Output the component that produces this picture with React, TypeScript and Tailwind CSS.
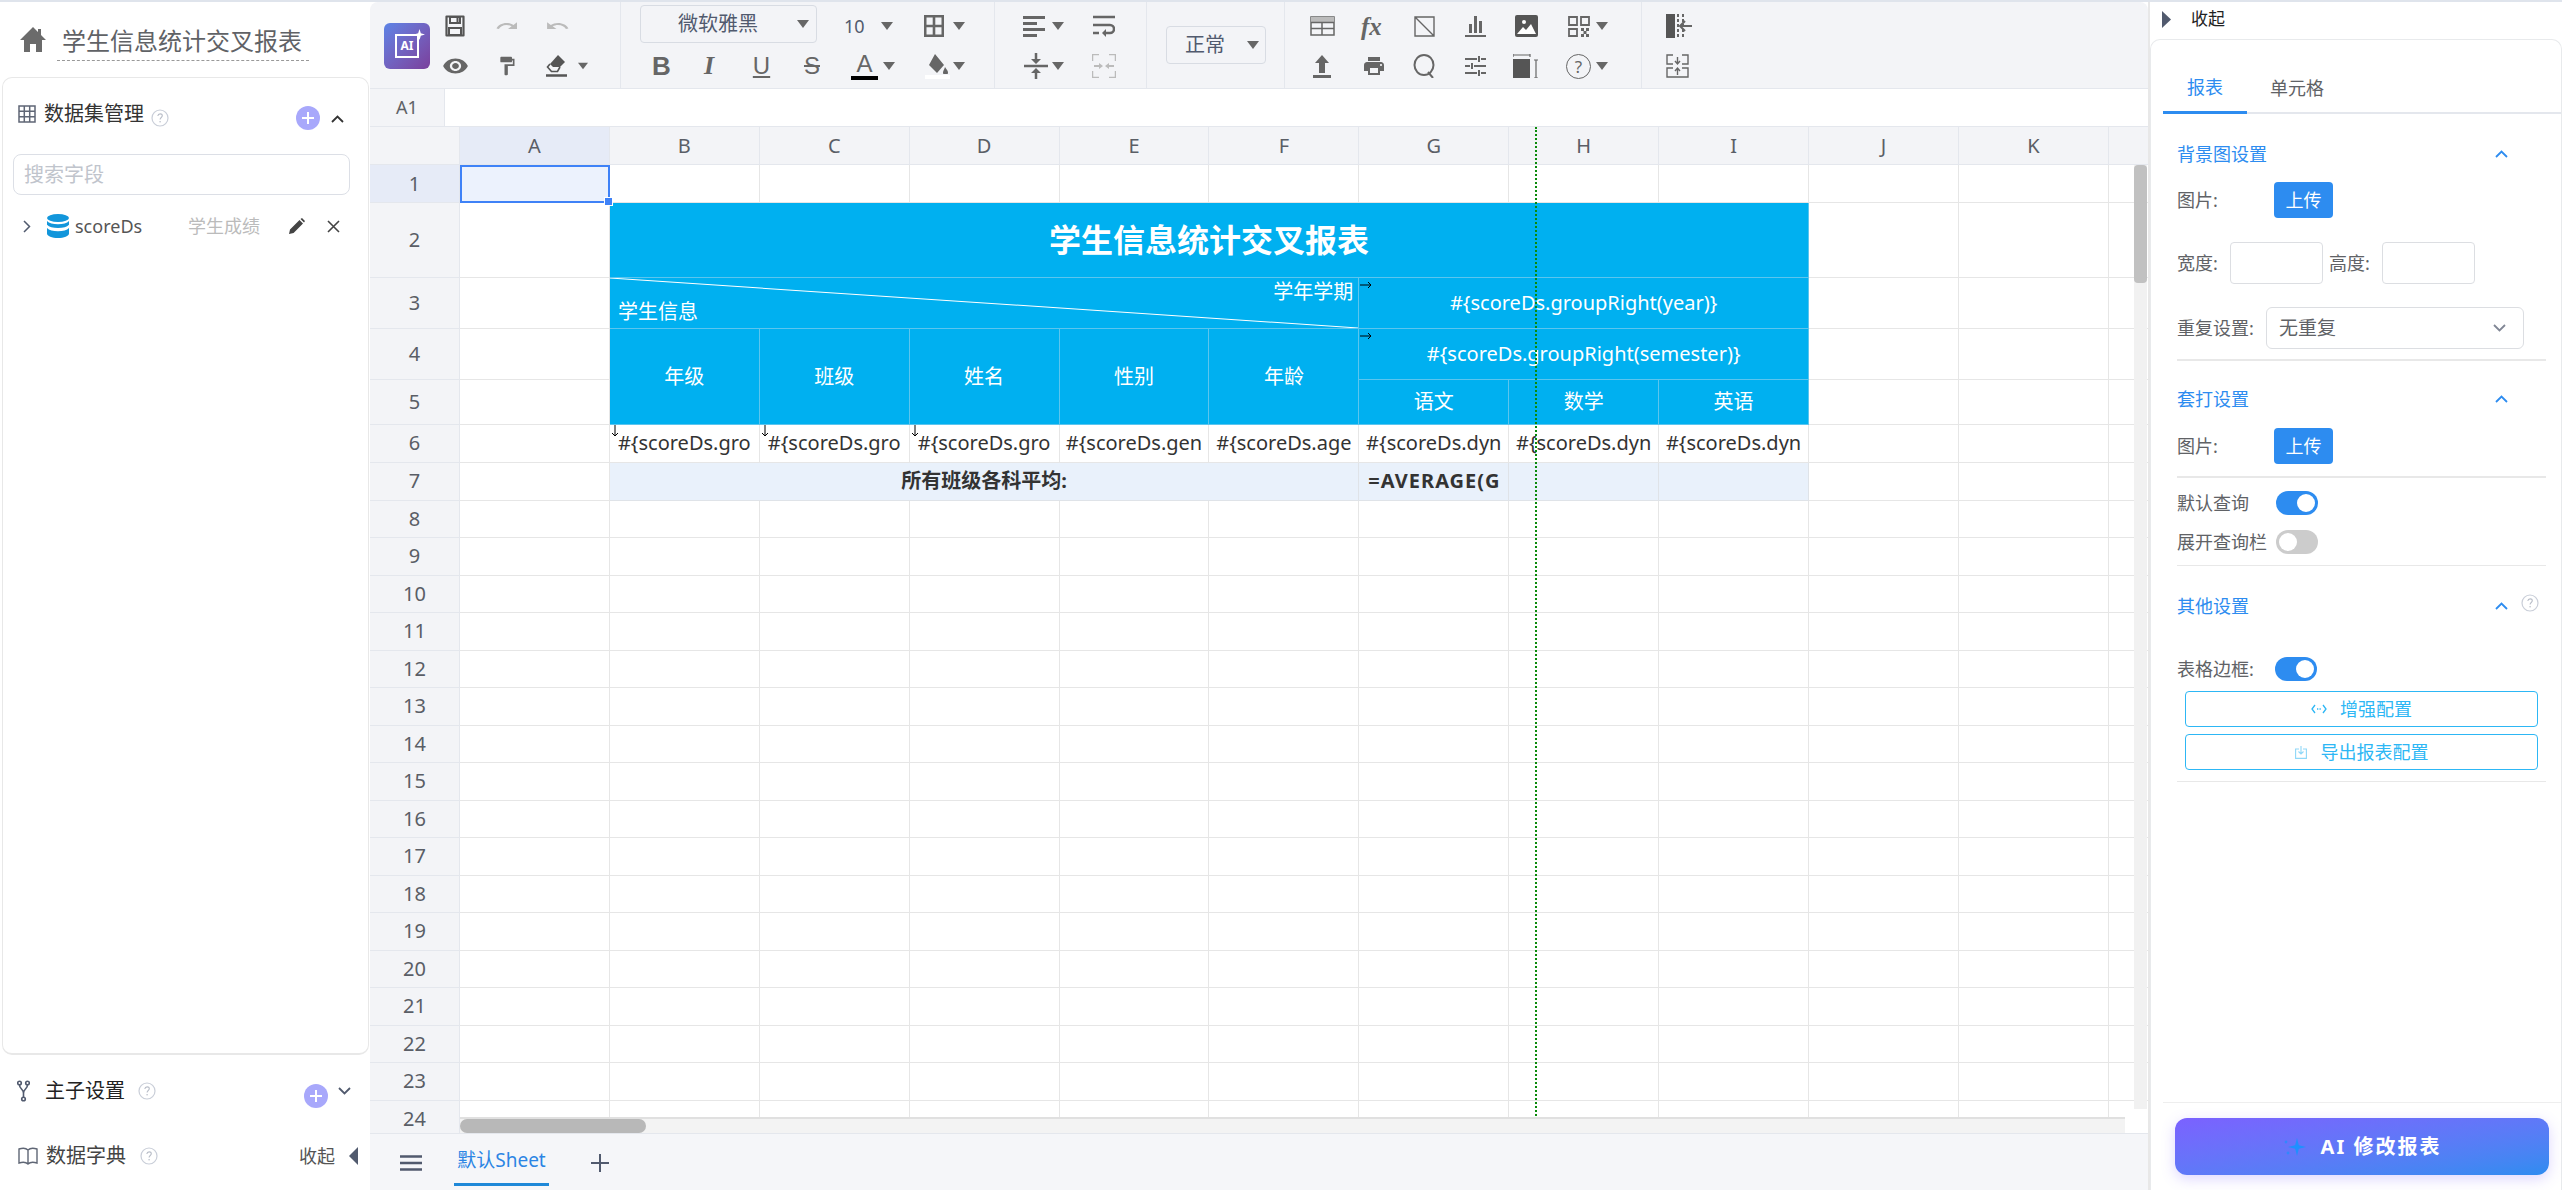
import { ReactNode } from "react";

const Caret = ({ className = "" }: { className?: string }) => (
  <svg viewBox="0 0 12 8" className={`h-[8px] w-[12px] shrink-0 fill-[#666] ${className}`}>
    <path d="M0 0h12L6 8z" />
  </svg>
);

const Ico = ({ className = "", view = "0 0 24 24", children }: { className?: string; view?: string; children: ReactNode }) => (
  <svg viewBox={view} preserveAspectRatio="none" className={`shrink-0 fill-[#666] ${className}`}>
    {children}
  </svg>
);

const HelpDot = ({ className = "" }: { className?: string }) => (
  <svg viewBox="0 0 18 18" className={`h-[18px] w-[18px] shrink-0 ${className}`}>
    <circle cx="9" cy="9" r="8" fill="none" stroke="#c9ced8" strokeWidth="1.2" />
    <path d="M6.8 7c.2-1.400 1.100-2.100 2.300-2.100 1.300 0 2.200.8 2.200 1.900 0 1.700-2.200 1.700-2.200 3.600" fill="none" stroke="#b8bdc8" strokeWidth="1.1" />
    <circle cx="9.1" cy="12.8" r=".8" fill="#b8bdc8" />
  </svg>
);

const PlusDot = ({ className = "" }: { className?: string }) => (
  <span className={`flex h-[24px] w-[24px] shrink-0 items-center justify-center rounded-full bg-[#a8a8fb] ${className}`}>
    <svg viewBox="0 0 14 14" className="h-[14px] w-[14px]">
      <path d="M7 1v12M1 7h12" stroke="#fff" strokeWidth="2" />
    </svg>
  </span>
);

const Chevron = ({ className = "", down = false, color = "#515a6e" }: { className?: string; down?: boolean; color?: string }) => (
  <svg viewBox="0 0 13 8" className={`h-[8px] w-[13px] shrink-0 ${className}`}>
    <path d={down ? "M1 1l5.500 5.500L12 1" : "M1 7l5.500-5.500L12 7"} fill="none" stroke={color} strokeWidth="1.8" />
  </svg>
);

function Sidebar() {
  return (
    <aside className="flex w-[370px] shrink-0 flex-col">
      <div className="flex h-[75px] shrink-0 items-start pt-[21px]">
        <svg viewBox="0 0 26 25" className="ml-[20px] mt-[4px] h-[25px] w-[26px] fill-[#6b6b6b]">
          <path d="M13 0L0 13h4v12h6v-8h6v8h6V13h4l-5-5V2h-3v3z" />
        </svg>
        <div className="ml-[11px] h-[38px] w-[252px] border-b border-dashed border-[#999] px-[5px] text-[24px] leading-[36px] text-[#606266]">
          学生信息统计交叉报表
        </div>
      </div>
      <div className="ml-[2px] w-[367px] flex-1 rounded-[10px] border border-b-2 border-[#e8e8e8]">
        <div className="mt-[24px] flex h-[24px] items-center pl-[15px] pr-[24px]">
          <svg viewBox="0 0 18 18" className="h-[18px] w-[18px]">
            <path d="M1 1h16v16H1zM1 6.300h16M1 11.700h16M6.300 1v16M11.700 1v16" fill="none" stroke="#5f6675" strokeWidth="1.5" />
          </svg>
          <span className="ml-[8px] text-[20px] text-[#333]">数据集管理</span>
          <HelpDot className="ml-[7px] mt-[7px]" />
          <PlusDot className="ml-auto mt-[8px]" />
          <Chevron className="ml-[11px] mt-[10px]" color="#333" />
        </div>
        <div className="ml-[10px] mt-[28px] flex h-[41px] w-[337px] items-center rounded-[8px] border border-[#dcdfe6] pl-[10px] text-[20px] text-[#c0c4cc]">
          搜索字段
        </div>
        <div className="mt-[19px] flex h-[24px] items-center pl-[20px]">
          <svg viewBox="0 0 8 13" className="h-[13px] w-[8px]">
            <path d="M1 1l5.500 5.500L1 12" fill="none" stroke="#515a6e" strokeWidth="1.500" />
          </svg>
          <svg viewBox="0 0 22 24" className="ml-[16px] h-[24px] w-[22px] fill-[#1296db]">
            <ellipse cx="11" cy="4" rx="11" ry="4" />
            <path d="M0 7c2 2.400 6 3.200 11 3.200S20 9.400 22 7v3.800c-2 2.400-6 3.200-11 3.200S2 13.200 0 10.800zM0 14c2 2.400 6 3.200 11 3.200s9-.8 11-3.200v5.500c0 2.400-5 4.500-11 4.500S0 21.900 0 19.500z" />
          </svg>
          <span className="ml-[6px] w-[113px] text-[18px] text-[#555]">scoreDs</span>
          <span className="w-[101px] text-[18px] text-[#bbb]">学生成绩</span>
          <svg viewBox="0 0 16 16" className="h-[16px] w-[16px] fill-[#444]">
            <path d="M0 16l1-4.600L10.500 2l3.500 3.500L4.600 15zM11.500 1L13 0l3 3-1 1.500z" />
          </svg>
          <svg viewBox="0 0 13 13" className="ml-[22px] h-[13px] w-[13px]">
            <path d="M1 1l11 11M12 1L1 12" stroke="#444" strokeWidth="1.6" />
          </svg>
        </div>
      </div>
      <div className="h-[135px] shrink-0 overflow-hidden pt-[24px]">
        <div className="flex h-[24px] items-center pl-[17px] pr-[19px]">
          <svg viewBox="0 0 13 22" className="h-[22px] w-[13px]">
            <g fill="none" stroke="#515a6e" strokeWidth="1.6">
              <circle cx="2.500" cy="3" r="1.800" />
              <circle cx="10.500" cy="3" r="1.800" />
              <circle cx="6.500" cy="19" r="1.800" />
              <path d="M2.500 5c0 4 4 4 4 8v4M10.500 5c0 4-4 4-4 8" />
            </g>
          </svg>
          <span className="ml-[15px] text-[20px] text-[#222]">主子设置</span>
          <HelpDot className="ml-[13px]" />
          <PlusDot className="ml-auto mt-[10px]" />
          <Chevron className="ml-[10px]" down />
        </div>
        <div className="mt-[41px] flex h-[24px] items-center pl-[18px] pr-[12px]">
          <svg viewBox="0 0 20 18" className="h-[18px] w-[20px]">
            <path d="M10 3C8 1 4 1 1 2v14c3-1 7-1 9 1 2-2 6-2 9-1V2c-3-1-7-1-9 1zM10 3v14" fill="none" stroke="#5f6675" strokeWidth="1.4" />
          </svg>
          <span className="ml-[8px] text-[20px] text-[#444]">数据字典</span>
          <HelpDot className="ml-[14px]" />
          <span className="ml-auto text-[18px] text-[#555]">收起</span>
          <svg viewBox="0 0 9 18" className="ml-[14px] h-[18px] w-[9px] fill-[#515a6e]">
            <path d="M9 0v18L0 9z" />
          </svg>
        </div>
      </div>
    </aside>
  );
}

const Row = ({ children, className = "" }: { children: ReactNode; className?: string }) => (
  <div className={`flex h-[40px] items-center ${className}`}>{children}</div>
);

const Glyph = ({ className = "", children }: { className?: string; children: ReactNode }) => (
  <span className={`block shrink-0 text-center leading-none text-[#666] ${className}`}>{children}</span>
);

function Toolbar() {
  return (
    <div className="flex h-[87px] shrink-0 rounded-t-[8px] border-b border-[#e4e7ed] bg-[#f3f4f7]">
      <div className="flex w-[251px] shrink-0 items-center border-r border-[#e4e7ed]">
        <div className="relative ml-[14px] mt-[2px] flex h-[46px] w-[46px] shrink-0 items-center justify-center rounded-[6px] bg-gradient-to-br from-[#5b83e6] to-[#7a3f9c]">
          <div className="flex h-[24px] w-[24px] items-center justify-center border-2 border-white text-[12px] font-bold text-white">AI</div>
          <svg viewBox="0 0 10 10" className="absolute right-[5px] top-[6px] h-[11px] w-[11px] fill-white">
            <path d="M5 0l1.200 3.800L10 5 6.200 6.200 5 10 3.800 6.200 0 5l3.800-1.200z" />
          </svg>
        </div>
        <div className="flex flex-col pt-[1px]">
          <Row>
            <svg viewBox="0 0 22 22" className="ml-[14px] h-[22px] w-[22px]">
              <path d="M2.500 1.500h17v19h-17z" fill="none" stroke="#555" strokeWidth="2.200" strokeLinejoin="round" />
              <path d="M6 2h10v6H6zM5 13h12v7H5z" fill="none" stroke="#555" strokeWidth="2" />
              <path d="M12.500 3h2v4h-2z" fill="#555" />
            </svg>
            <Ico className="ml-[29px] h-[18px] w-[24px] !fill-[#bbb]">
              <path d="M18.400 10.600C16.550 8.990 14.150 8 11.500 8c-4.650 0-8.580 3.030-9.960 7.220L3.900 16c1.050-3.190 4.050-5.500 7.600-5.500 1.950 0 3.730.72 5.120 1.880L13 16h9V7l-3.600 3.600z" />
            </Ico>
            <Ico className="ml-[26px] h-[18px] w-[25px] !fill-[#bbb]">
              <path d="M12.500 8c-2.650 0-5.050.99-6.900 2.600L2 7v9h9l-3.620-3.620c1.390-1.160 3.160-1.880 5.120-1.880 3.540 0 6.550 2.310 7.600 5.500l2.370-.78C21.080 11.030 17.150 8 12.500 8z" />
            </Ico>
          </Row>
          <Row>
            <Ico className="ml-[12px] h-[24px] w-[27px]">
              <path d="M12 4.500C7 4.500 2.730 7.610 1 12c1.730 4.390 6 7.500 11 7.500s9.270-3.110 11-7.500c-1.730-4.390-6-7.500-11-7.500zM12 17c-2.760 0-5-2.240-5-5s2.240-5 5-5 5 2.240 5 5-2.240 5-5 5zm0-8c-1.660 0-3 1.340-3 3s1.340 3 3 3 3-1.340 3-3-1.340-3-3-3z" />
            </Ico>
            <Ico className="ml-[28px] h-[22px] w-[20px]">
              <path d="M18 4V3c0-.55-.45-1-1-1H5c-.55 0-1 .45-1 1v4c0 .55.45 1 1 1h12c.55 0 1-.45 1-1V6h1v4H9v11c0 .55.45 1 1 1h2c.55 0 1-.45 1-1v-9h8V4h-3z" />
            </Ico>
            <svg viewBox="0 0 21 22" className="ml-[29px] h-[22px] w-[21px]">
              <path d="M12 0l7 7-5 5H7L4 9z" fill="#555" />
              <path d="M4 9l-2.500 3 4 4.500h6l2.500-4.500" fill="none" stroke="#555" strokeWidth="1.600" />
              <path d="M0 20.500h21" stroke="#555" strokeWidth="2.500" />
            </svg>
            <Caret className="ml-[11px] !w-[10px]" />
          </Row>
        </div>
      </div>
      <div className="flex w-[374px] shrink-0 flex-col border-r border-[#e4e7ed] pt-[4px]">
        <Row>
          <div className="mb-[4px] ml-[19px] flex h-[38px] w-[177px] shrink-0 items-center rounded-[4px] border border-[#d8dce3] pl-[37px] text-[20px] text-[#515a6e]">
            微软雅黑
            <Caret className="ml-[39px]" />
          </div>
          <span className="ml-[27px] w-[22px] text-[18px] text-[#515a6e]">10</span>
          <Caret className="ml-[15px]" />
          <svg viewBox="0 0 20 22" className="ml-[31px] h-[22px] w-[20px] fill-[#666]">
            <path d="M0 0h20v22H0zm2.500 2.500v7.200h6.200V2.500zm8.800 0v7.200h6.200V2.500zM2.500 12.300v7.200h6.200v-7.200zm8.800 0v7.200h6.200v-7.200z" fillRule="evenodd" />
          </svg>
          <Caret className="ml-[9px]" />
        </Row>
        <Row>
          <Glyph className="ml-[31px] w-[16px] font-['Liberation_Sans',sans-serif] text-[26px] font-bold">B</Glyph>
          <Glyph className="ml-[32px] w-[18px] font-['Liberation_Serif',serif] text-[26px] font-bold italic">I</Glyph>
          <Glyph className="ml-[34px] w-[19px] font-['Liberation_Sans',sans-serif] text-[24px] underline">U</Glyph>
          <Glyph className="ml-[30px] w-[22px] font-['Liberation_Sans',sans-serif] text-[24px] line-through">S</Glyph>
          <div className="ml-[28px] flex w-[27px] shrink-0 flex-col items-center">
            <span className="font-['Liberation_Sans',sans-serif] text-[24px] leading-[22px] text-[#666]">A</span>
            <span className="mt-[1px] h-[4px] w-[27px] bg-black" />
          </div>
          <Caret className="ml-[5px]" />
          <div className="ml-[30px] flex w-[25px] shrink-0 flex-col items-center">
            <svg viewBox="0 0 25 20" className="h-[20px] w-[25px] fill-[#666]">
              <path d="M10 0l9 11-7 8-8-8zM20 13c2 3 3 4 3 5.500a2.500 2.500 0 0 1-5 0c0-1.500 1-2.500 2-5.500z" />
            </svg>
            <span className="mt-[1px] h-[4px] w-[25px] bg-white" />
          </div>
          <Caret className="ml-[3px]" />
        </Row>
      </div>
      <div className="flex w-[152px] shrink-0 flex-col border-r border-[#e4e7ed] pt-[4px]">
        <Row>
          <svg viewBox="0 0 22 21" className="ml-[28px] h-[21px] w-[22px] fill-[#666]">
            <path d="M0 0h22v3H0zM0 6h14v3H0zM0 12h22v3H0zM0 18h14v3H0z" />
          </svg>
          <Caret className="ml-[7px]" />
          <svg viewBox="0 0 22 22" className="ml-[29px] h-[22px] w-[22px]">
            <path d="M0 2h22M0 10h17a4 4 0 0 1 0 8h-6M0 18h6" fill="none" stroke="#666" strokeWidth="2.500" />
            <path d="M13 14l-4 4 4 4z" fill="#666" />
          </svg>
        </Row>
        <Row>
          <svg viewBox="0 0 24 26" className="ml-[29px] h-[26px] w-[24px]">
            <path d="M0 13h24" stroke="#666" strokeWidth="2.500" />
            <path d="M12 0v7M12 19v7" stroke="#666" strokeWidth="2.500" />
            <path d="M7 6h10l-5 5zM7 20h10l-5-5z" fill="#666" />
          </svg>
          <Caret className="ml-[4px]" />
          <svg viewBox="0 0 24 24" className="ml-[28px] h-[24px] w-[24px]">
            <path d="M0 7V0h7M17 0h7v7M0 17v7h7M17 24h7v-7" fill="none" stroke="#bbb" strokeWidth="2.500" />
            <path d="M2 12h7M22 12h-7" stroke="#bbb" strokeWidth="2" />
            <path d="M11 12l-4-3v6zM13 12l4-3v6z" fill="#bbb" />
          </svg>
        </Row>
      </div>
      <div className="flex w-[138px] shrink-0 items-center border-r border-[#e4e7ed]">
        <div className="ml-[19px] flex h-[38px] w-[100px] shrink-0 items-center rounded-[4px] border border-[#d8dce3] pl-[18px] text-[20px] text-[#515a6e]">
          正常
          <Caret className="ml-[22px]" />
        </div>
      </div>
      <div className="flex w-[357px] shrink-0 flex-col border-r border-[#e4e7ed] pt-[4px]">
        <Row>
          <svg viewBox="0 0 25 20" className="ml-[25px] h-[20px] w-[25px]">
            <path d="M1 1h23v18H1z" fill="none" stroke="#666" strokeWidth="1.500" />
            <path d="M1 1h23v5H1z" fill="#bbb" />
            <path d="M1 6.500h23M1 12.500h23M12 6.500V19" stroke="#666" strokeWidth="1.500" />
          </svg>
          <span className="ml-[26px] w-[25px] shrink-0 font-['Liberation_Serif',serif] text-[25px] font-bold italic leading-none text-[#666]">fx</span>
          <svg viewBox="0 0 21 21" className="ml-[28px] h-[21px] w-[21px]">
            <path d="M1 1h19v19H1zM1 1l19 19" fill="none" stroke="#666" strokeWidth="1.400" />
          </svg>
          <svg viewBox="0 0 23 22" className="ml-[29px] h-[22px] w-[23px] fill-[#666]">
            <path d="M1 20h21v2H1zM5 9h3v9H5zM10 1h3v17h-3zM15 6h3v12h-3z" />
          </svg>
          <svg viewBox="0 0 23 22" className="ml-[28px] h-[22px] w-[23px]">
            <rect width="23" height="22" rx="2" fill="#555" />
            <circle cx="9" cy="7" r="2" fill="#fff" />
            <path d="M2 19l6-7 3 3 5-6 5 10z" fill="#fff" />
          </svg>
          <svg viewBox="0 0 22 21" className="ml-[30px] h-[21px] w-[22px]">
            <path d="M1 1h8v8H1zM13 1h8v8h-8zM1 13h8v7H1z" fill="none" stroke="#666" strokeWidth="1.800" />
            <path d="M13 12h3v3h-3zM18 12h3v3h-3zM15.500 15h3v3h-3zM13 18h3v3h-3zM18 18h3v3h-3z" fill="#666" />
          </svg>
          <Caret className="ml-[6px]" />
        </Row>
        <Row>
          <svg viewBox="0 0 18 23" className="ml-[28px] h-[23px] w-[18px] fill-[#666]">
            <path d="M9 0l7 8h-4v10H6V8H2zM0 20h18v3H0z" />
          </svg>
          <Ico className="ml-[31px] h-[24px] w-[24px]">
            <path d="M19 8H5c-1.660 0-3 1.340-3 3v6h4v4h12v-4h4v-6c0-1.660-1.340-3-3-3zm-3 11H8v-5h8v5zm3-7c-.55 0-1-.45-1-1s.45-1 1-1 1 .45 1 1-.45 1-1 1zm-1-9H6v4h12V3z" />
          </Ico>
          <svg viewBox="0 0 23 24" className="ml-[27px] h-[24px] w-[23px]">
            <ellipse cx="11" cy="11" rx="9.500" ry="10" fill="none" stroke="#666" strokeWidth="2" />
            <path d="M15 18l5 6" stroke="#666" strokeWidth="2" />
          </svg>
          <svg viewBox="0 0 21 20" className="ml-[29px] h-[20px] w-[21px]">
            <path d="M0 3h12M16 3h5M0 10h5M9 10h12M0 17h12M16 17h5" stroke="#666" strokeWidth="2" />
            <path d="M14 0v6M7 7v6M14 14v6" stroke="#666" strokeWidth="2" />
          </svg>
          <svg viewBox="0 0 25 24" className="ml-[27px] h-[24px] w-[25px]">
            <path d="M0 1h17M0 0v3M17 0v3M23 6v18M21 6h4M21 24h4" fill="none" stroke="#666" strokeWidth="1.200" />
            <path d="M0 5h17v19H0z" fill="#555" />
          </svg>
          <span className="ml-[28px] flex h-[25px] w-[25px] shrink-0 items-center justify-center rounded-full border-[1.500px] border-[#666] text-[17px] leading-none text-[#666]">?</span>
          <Caret className="ml-[5px]" />
        </Row>
      </div>
      <div className="flex flex-col pt-[4px]">
        <Row>
          <svg viewBox="0 0 26 24" className="ml-[24px] h-[24px] w-[26px]">
            <path d="M0 0h9v24H0z" fill="#555" />
            <path d="M12 0v24M17 0v24" stroke="#666" strokeWidth="2" strokeDasharray="3 2" fill="none" />
            <path d="M26 12H14M19 7l-5 5 5 5" fill="none" stroke="#666" strokeWidth="2" />
          </svg>
        </Row>
        <Row>
          <svg viewBox="0 0 23 24" className="ml-[24px] h-[24px] w-[23px]">
            <path d="M7 1H1v9h6M16 1h6v9h-6M7 14H1v9h21v-9h-6" fill="none" stroke="#666" strokeWidth="1.400" />
            <path d="M11.500 3v6M9 7l2.500 3L14 7M11.500 21v-6M9 17l2.500-3 2.500 3" fill="none" stroke="#666" strokeWidth="1.400" />
          </svg>
        </Row>
      </div>
    </div>
  );
}

const blueCell = "flex items-center justify-center border-r border-b border-[#5cc5ee] bg-[#00b0f0] text-[20px] text-white";
const plain = "border-r border-b border-[#e6e6e6] bg-white";
const dataCell = "relative flex items-center justify-center overflow-hidden whitespace-nowrap border-r border-b border-[#e6e6e6] bg-white text-[20px] text-[#333]";
const rowHead = "flex items-center justify-center border-r border-b border-[#e4e7ed] bg-[#f3f4f7] text-[20px] text-[#5a5e66]";
const avgCell = "flex items-center border-r border-b border-[#dfe3e8] bg-[#e9f1fb] text-[20px] font-bold text-[#333]";

const DownMark = () => (
  <svg viewBox="0 0 8 12" className="absolute left-[1px] top-[0px] h-[12px] w-[8px]">
    <path d="M4 0v11M1 8l3 3 3-3" fill="none" stroke="#000" strokeWidth="1" />
  </svg>
);

const RightMark = () => (
  <svg viewBox="0 0 12 8" className="absolute left-[1px] top-[3px] h-[8px] w-[12px]">
    <path d="M0 4h11M8 1l3 3-3 3" fill="none" stroke="#000" strokeWidth="1" />
  </svg>
);

const letters = ["A", "B", "C", "D", "E", "F", "G", "H", "I", "J", "K", ""];
const emptyTail = [0, 1, 2];

function Sheet() {
  return (
    <div className="relative h-[1006px] shrink-0 overflow-hidden bg-white">
      <div className="grid w-[1778px] grid-cols-[90px_repeat(11,149.9px)_40px] grid-rows-[38px_38px_75px_51px_51px_45px_37.5px_38px_repeat(17,37.5px)]">
        <div className={rowHead} />
        {letters.map((l, i) => (
          <div key={i} className={i === 0 ? `${rowHead} !bg-[#e6ebf7]` : rowHead}>{l}</div>
        ))}

        <div className={`${rowHead} !bg-[#e6ebf7]`}>1</div>
        <div className="relative border-2 border-[#3f82f7] bg-[#ecf2fd]">
          <span className="absolute -bottom-[5px] -right-[5px] h-[9px] w-[9px] border border-white bg-[#3f82f7]" />
        </div>
        {letters.slice(1).map((l, i) => <div key={i} className={plain} />)}

        <div className={rowHead}>2</div>
        <div className={plain} />
        <div className={`${blueCell} col-span-8 text-[32px] font-bold`}>学生信息统计交叉报表</div>
        {emptyTail.map((i) => <div key={i} className={plain} />)}

        <div className={rowHead}>3</div>
        <div className={plain} />
        <div className={`${blueCell} relative col-span-5`}>
          <svg viewBox="0 0 100 100" preserveAspectRatio="none" className="absolute inset-0 h-full w-full">
            <path d="M0 0L100 100" stroke="#fff" strokeWidth="1" vectorEffect="non-scaling-stroke" />
          </svg>
          <span className="absolute right-[5px] top-[-1px] leading-[30px]">学年学期</span>
          <span className="absolute bottom-[1px] left-[8px] leading-[30px]">学生信息</span>
        </div>
        <div className={`${blueCell} relative col-span-3`}><RightMark />{"#{scoreDs.groupRight(year)}"}</div>
        {emptyTail.map((i) => <div key={i} className={plain} />)}

        <div className={rowHead}>4</div>
        <div className={plain} />
        {["年级", "班级", "姓名", "性别", "年龄"].map((t) => (
          <div key={t} className={`${blueCell} row-span-2`}>{t}</div>
        ))}
        <div className={`${blueCell} relative col-span-3`}><RightMark />{"#{scoreDs.groupRight(semester)}"}</div>
        {emptyTail.map((i) => <div key={i} className={plain} />)}

        <div className={rowHead}>5</div>
        <div className={plain} />
        {["语文", "数学", "英语"].map((t) => (
          <div key={t} className={blueCell}>{t}</div>
        ))}
        {emptyTail.map((i) => <div key={i} className={plain} />)}

        <div className={rowHead}>6</div>
        <div className={plain} />
        <div className={dataCell}><DownMark />{"#{scoreDs.gro"}</div>
        <div className={dataCell}><DownMark />{"#{scoreDs.gro"}</div>
        <div className={dataCell}><DownMark />{"#{scoreDs.gro"}</div>
        <div className={dataCell}>{"#{scoreDs.gen"}</div>
        <div className={dataCell}>{"#{scoreDs.age"}</div>
        <div className={dataCell}>{"#{scoreDs.dyn"}</div>
        <div className={dataCell}>{"#{scoreDs.dyn"}</div>
        <div className={dataCell}>{"#{scoreDs.dyn"}</div>
        {emptyTail.map((i) => <div key={i} className={plain} />)}

        <div className={rowHead}>7</div>
        <div className={plain} />
        <div className={`${avgCell} col-span-5 justify-center`}>所有班级各科平均:</div>
        <div className={`${avgCell} overflow-hidden whitespace-nowrap pl-[9px] tracking-[1px]`}>=AVERAGE(G</div>
        <div className={avgCell} />
        <div className={avgCell} />
        {emptyTail.map((i) => <div key={i} className={plain} />)}

        {Array.from({ length: 17 }, (_, r) => (
          <div key={r} className="contents">
            <div className={rowHead}>{r + 8}</div>
            {letters.map((l, i) => <div key={i} className={plain} />)}
          </div>
        ))}
      </div>

      <div className="absolute bottom-[17px] left-[1165px] top-0 border-l-2 border-dotted border-[#0a8a0a]" />

      <div className="absolute bottom-[24px] left-[1764px] top-[38px] w-[13px] bg-[#f1f1f1]">
        <div className="h-[118px] rounded-[4px] bg-[#c1c1c1]" />
      </div>
      <div className="absolute bottom-0 left-[90px] h-[16px] w-[1665px] border-t-2 border-[#e0e0e0] bg-[#f3f3f3]">
        <div className="h-[14px] w-[186px] rounded-full bg-[#b8b8b8]" />
      </div>
      <div className="absolute bottom-0 left-[1755px] h-[16px] w-[23px] bg-white" />
    </div>
  );
}

function SheetTabs() {
  return (
    <div className="flex h-[57px] shrink-0 items-start border-t border-[#e4e7ed] bg-[#f5f6f9]">
      <svg viewBox="0 0 22 16" className="ml-[30px] mt-[21px] h-[16px] w-[22px]">
        <path d="M0 1.500h22M0 8h22M0 14.500h22" stroke="#515a6e" strokeWidth="2.500" />
      </svg>
      <div className="ml-[32px] flex h-[52px] w-[95px] items-center justify-center whitespace-nowrap border-b-[3px] border-[#1e88d8] pt-[4px] text-[19px] text-[#2b85e4]">
        默认Sheet
      </div>
      <svg viewBox="0 0 18 18" className="ml-[42px] mt-[20px] h-[18px] w-[18px]">
        <path d="M9 0v18M0 9h18" stroke="#515a6e" strokeWidth="2" />
      </svg>
    </div>
  );
}

const Heading = ({ title, help = false, className = "" }: { title: string; help?: boolean; className?: string }) => (
  <div className={`flex h-[28px] items-center text-[18px] text-[#2d8cf0] ${className}`}>
    {title}
    <Chevron className="ml-auto mr-[13px]" color="#2d8cf0" />
    {help ? <HelpDot className="-mt-[6px]" /> : <span className="w-[18px]" />}
    <span className="w-[7px]" />
  </div>
);

const Upload = () => (
  <span className="flex h-[36px] w-[59px] items-center justify-center rounded-[4px] bg-[#2d8cf0] text-[18px] text-white">上传</span>
);

const Switch = ({ on }: { on: boolean }) => (
  <span className={`flex h-[24px] w-[42px] shrink-0 items-center rounded-full px-[3px] ${on ? "justify-end bg-[#2d8cf0]" : "justify-start bg-[#ccc]"}`}>
    <span className="h-[18px] w-[18px] rounded-full bg-white" />
  </span>
);

const Divider = ({ className = "" }: { className?: string }) => <div className={`bg-[#e8e8e8] ${className}`} />;

function RightPanel() {
  return (
    <aside className="flex w-[412px] shrink-0 flex-col text-[18px] leading-[24px] text-[#606266]">
      <div className="flex h-[34px] shrink-0 items-center pl-[12px]">
        <svg viewBox="0 0 9 17" className="h-[17px] w-[9px] fill-[#515a6e]">
          <path d="M0 0l9 8.500L0 17z" />
        </svg>
        <span className="ml-[20px] text-[17px] text-[#222]">收起</span>
      </div>
      <div className="mt-[3px] flex flex-1 flex-col rounded-t-[10px] border-l border-r border-t border-[#e8eaec]">
        <div className="ml-[12px] flex h-[74px] shrink-0 items-end border-b-2 border-[#e4e7ed]">
          <div className="-mb-[2px] flex h-[52px] w-[84px] items-center justify-center border-b-[3px] border-[#2d8cf0] text-[#2d8cf0]">报表</div>
          <div className="-mb-[2px] flex h-[52px] w-[100px] items-center justify-center text-[#606266]">单元格</div>
        </div>
        <div className="box-content w-[369px] pl-[26px]">
          <Heading title="背景图设置" className="mt-[26px]" />
          <div className="mt-[14px] flex items-center">
            <span className="w-[97px]">图片:</span>
            <Upload />
          </div>
          <div className="mt-[24px] flex items-center">
            <span className="w-[53px]">宽度:</span>
            <span className="h-[42px] w-[93px] rounded-[4px] border border-[#dcdee2]" />
            <span className="ml-[6px] w-[53px]">高度:</span>
            <span className="h-[42px] w-[93px] rounded-[4px] border border-[#dcdee2]" />
          </div>
          <div className="mt-[23px] flex items-center">
            <span className="w-[89px] whitespace-nowrap">重复设置:</span>
            <div className="flex h-[42px] w-[258px] items-center rounded-[6px] border border-[#dcdee2] pl-[12px] pr-[17px] text-[19px]">
              无重复
              <Chevron className="ml-auto" down color="#808695" />
            </div>
          </div>
          <Divider className="mt-[10px] h-[2px]" />

          <Heading title="套打设置" className="mt-[24px]" />
          <div className="mt-[15px] flex items-center">
            <span className="w-[97px]">图片:</span>
            <Upload />
          </div>
          <Divider className="mt-[12px] h-[2px]" />

          <div className="mt-[13px] flex items-center">
            <span className="w-[99px]">默认查询</span>
            <Switch on />
          </div>
          <div className="mt-[15px] flex items-center">
            <span className="w-[99px] whitespace-nowrap">展开查询栏</span>
            <Switch on={false} />
          </div>
          <Divider className="mt-[11px] h-px" />

          <Heading title="其他设置" help className="mt-[26px]" />
          <div className="mt-[37px] flex items-center">
            <span className="w-[98px]">表格边框:</span>
            <Switch on />
          </div>
          <div className="ml-[8px] mt-[10px] flex h-[36px] w-[353px] items-center justify-center rounded-[4px] border border-[#2db7f5] text-[#2db7f5]">
            <svg viewBox="0 0 16 10" className="mr-[13px] h-[10px] w-[16px]">
              <path d="M4 1L1 5l3 4M12 1l3 4-3 4" fill="none" stroke="#2db7f5" strokeWidth="1.300" />
              <path d="M6 5h4" stroke="#2db7f5" strokeWidth="1.300" strokeDasharray="1.300 1.200" />
            </svg>
            增强配置
          </div>
          <div className="ml-[8px] mt-[7px] flex h-[36px] w-[353px] items-center justify-center rounded-[4px] border border-[#2db7f5] text-[#2db7f5]">
            <svg viewBox="0 0 12 13" className="mr-[14px] h-[13px] w-[12px]">
              <path d="M4 3H.6v9.400h10.800V3H8M6 0v8M3.500 5.500L6 8l2.500-2.500" fill="none" stroke="#8fd8f8" strokeWidth="1.100" />
            </svg>
            导出报表配置
          </div>
          <Divider className="mt-[11px] h-px" />
        </div>
        <div className="ml-[12px] mt-auto h-[88px] shrink-0 border-t border-[#eee] pl-[12px] pt-[15px]">
          <div className="flex h-[57px] w-[374px] items-center justify-center rounded-[12px] bg-gradient-to-br from-[#7b61ff] to-[#2d8cf0] text-[20px] font-bold tracking-[2px] text-white shadow-[0_4px_14px_rgba(123,97,255,0.25)]">
            <svg viewBox="0 0 23 20" className="mr-[15px] h-[20px] w-[23px] fill-[#1e90ff]">
              <path d="M14 1l1.800 7.200L23 10l-7.200 1.800L14 19l-1.800-7.200L5 10l7.200-1.800zM3 3l.6 1.400L5 5l-1.400.6L3 7l-.6-1.400L1 5l1.400-.6zM5 14l.6 1.400L7 16l-1.400.6L5 18l-.6-1.400L3 16l1.400-.6z" />
            </svg>
            AI 修改报表
          </div>
        </div>
      </div>
    </aside>
  );
}

export default function App() {
  return (
    <div className="flex h-[1190px] w-[2562px] flex-col overflow-hidden bg-white font-['Noto_Sans','Noto_Sans_CJK_SC',sans-serif]">
      <div className="h-[2px] shrink-0 bg-[#dfe4ec]" />
      <div className="flex min-h-0 flex-1">
        <Sidebar />
        <main className="flex w-[1780px] shrink-0 flex-col border-r-2 border-[#e8e8e8]">
          <Toolbar />
          <div className="flex h-[38px] shrink-0 border-b border-[#e4e7ed]">
            <div className="flex w-[75px] items-center justify-center border-r border-[#e4e7ed] bg-[#f3f4f7] text-[18px] text-[#606266]">A1</div>
          </div>
          <Sheet />
          <SheetTabs />
        </main>
        <RightPanel />
      </div>
    </div>
  );
}
